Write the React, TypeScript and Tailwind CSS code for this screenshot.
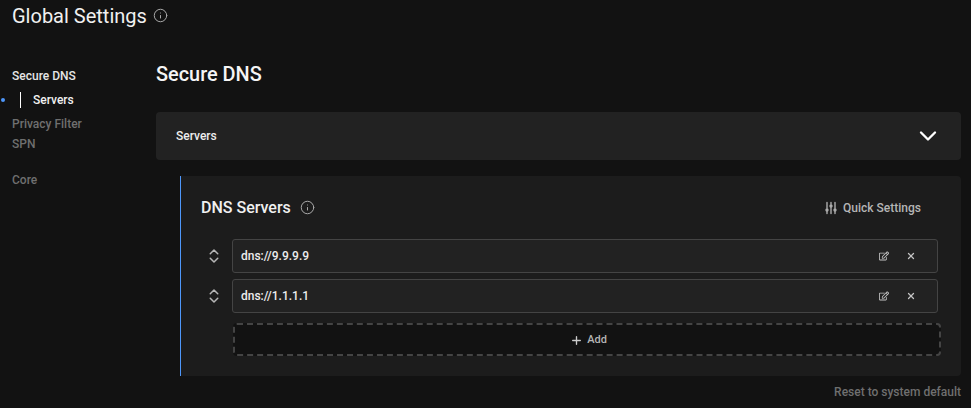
import React from 'react'
import { ChevronDown, ChevronsUpDown, Info, Plus, X } from 'lucide-react'
import { FaRegEdit } from 'react-icons/fa'
import { HiOutlineAdjustmentsVertical } from 'react-icons/hi2'

function NavItem({ label, className }: { label: string; className: string }) {
  return <div className={`h-5 pl-3 text-xs leading-5 font-medium ${className}`}>{label}</div>
}

function ServerRow({ value }: { value: string }) {
  return (
    <div className="flex items-center h-[34px]">
      <div className="flex justify-center w-[66px] shrink-0 -mr-[15px] text-[#b5b5b5]">
        <ChevronsUpDown size={18} strokeWidth={2} />
      </div>
      <div className="flex flex-1 items-center h-full pl-2 pr-[21px] rounded-[3px] border border-[#444444] bg-[#222222]">
        <span className="flex-1 text-xs font-medium text-[#ededed]">{value}</span>
        <FaRegEdit size={10} className="text-[#c4c4c4] mr-[17px]" />
        <X size={10} strokeWidth={3} className="text-[#c4c4c4]" />
      </div>
    </div>
  )
}

export default function App() {
  return (
    <div className="w-[971px] h-[408px] overflow-hidden bg-[#121212] font-['Roboto',sans-serif]">
      {/* Header */}
      <div className="flex items-center h-8 pl-3 gap-[6px]">
        <span className="text-xl leading-8 text-[#f0f0f0]">Global Settings</span>
        <Info size={15} strokeWidth={1.6} className="text-[#a8a8a8] -mt-0.5" />
      </div>

      <div className="flex pt-[33px]">
        {/* Sidebar */}
        <div className="w-[156px] shrink-0 pt-px">
          <NavItem label="Secure DNS" className="text-[#e5e5e5]" />
          <div className="relative flex items-center h-5 mt-[4px] mb-[4px] pl-[20px]">
            <span className="absolute left-[1px] top-[8px] w-1 h-1 rounded-full bg-[#4e97fa]" />
            <span className="w-px h-4 bg-white mr-3" />
            <span className="text-xs font-medium text-[#f0f0f0]">Servers</span>
          </div>
          <NavItem label="Privacy Filter" className="text-[#6f6f6f]" />
          <NavItem label="SPN" className="text-[#6f6f6f]" />
          <NavItem label="Core" className="mt-4 text-[#6f6f6f]" />
        </div>

        {/* Main */}
        <div className="flex-1 mr-[10px]">
          <h2 className="h-[47px] pt-px text-[19.9px] leading-[18px] font-medium text-[#f5f5f5]">Secure DNS</h2>
          <div className="flex items-center justify-between h-12 pl-5 pr-[19px] rounded bg-[#222222]">
            <span className="text-xs font-medium text-[#ededed]">Servers</span>
            <ChevronDown size={28} strokeWidth={2} className="text-white" />
          </div>

          <div className="ml-6 mt-4 h-[200px] rounded-r border-l border-[#4e97fa] bg-[#1c1c1c] pl-5 pr-[23px] pt-4">
            <div className="flex items-center justify-between h-[31px] mb-4">
              <div className="flex items-center gap-[9px]">
                <span className="text-base font-medium text-[#f0f0f0]">DNS Servers</span>
                <Info size={15} strokeWidth={1.6} className="text-[#a8a8a8]" />
              </div>
              <div className="flex items-center gap-[4px] mr-[17px] text-[#b5b5b5]">
                <HiOutlineAdjustmentsVertical size={16} strokeWidth={2} />
                <span className="text-xs font-medium">Quick Settings</span>
              </div>
            </div>
            <div className="flex flex-col gap-[6px] -ml-[20px]">
              <ServerRow value="dns://9.9.9.9" />
              <ServerRow value="dns://1.1.1.1" />
            </div>
            <div className="flex items-center justify-center gap-1 h-[33px] mt-[10px] ml-[32px] -mr-[3px] pl-[3px] pt-px rounded border-2 border-dashed border-[#444444] bg-[#121212] text-[#b5b5b5]">
              <Plus size={13} strokeWidth={2.5} className="text-[#cccccc]" />
              <span className="text-[11px] font-medium">Add</span>
            </div>
          </div>

          <div className="mt-[7px] text-right text-xs font-medium leading-[18px] text-[#6f6f6f]">Reset to system default</div>
        </div>
      </div>
    </div>
  )
}
